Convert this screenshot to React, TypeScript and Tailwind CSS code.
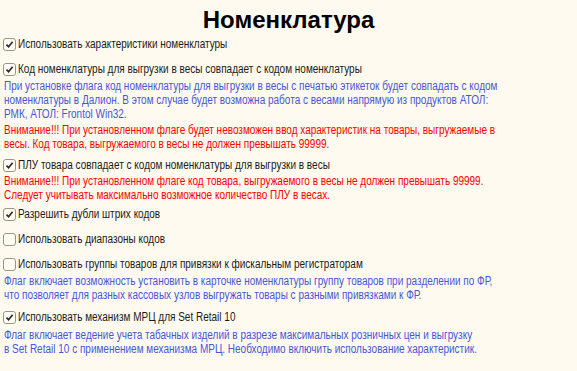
import React from "react";

function Box({ checked }: { checked: boolean }) {
  return (
    <span className="mr-[2px] flex h-[13px] w-[13px] shrink-0 items-center justify-center rounded-[3px] border border-[#9a9680] bg-[#fffdf6]">
      {checked && (
        <svg width="9" height="9" viewBox="0 0 9 9">
          <path d="M1.5 4.6 L3.6 6.8 L7.6 1.8" fill="none" stroke="#2b2b2b" strokeWidth="1.7" />
        </svg>
      )}
    </span>
  );
}

function Flag({ checked, label, className = "" }: { checked: boolean; label: string; className?: string }) {
  return (
    <div className={`flex items-center pl-[3px] text-[#1a1a1a] ${className}`}>
      <Box checked={checked} />
      <span className="inline-block origin-left scale-x-[0.8] whitespace-nowrap">{label}</span>
    </div>
  );
}

function Note({ tone, lines, className = "" }: { tone: "blue" | "red"; lines: string[]; className?: string }) {
  const color = tone === "blue" ? "text-[#4656d8]" : "text-[#ff0000]";
  return (
    <div className={`whitespace-nowrap pl-[4px] leading-[14px] ${color} ${className}`}>
      {lines.map((l, i) => (
        <span key={i} className="block origin-left scale-x-[0.8]">
          {l}
        </span>
      ))}
    </div>
  );
}

export default function App() {
  return (
    <div
      className="h-[371px] w-[577px] overflow-hidden bg-[#fffaef] text-[12.5px] leading-[14px]"
      style={{ fontFamily: '"Liberation Sans", Arial, sans-serif' }}
    >
      <h1 className="pt-[7px] text-center text-[24px] font-bold leading-[26px] text-black">Номенклатура</h1>

      <Flag className="mt-[4px]" checked label="Использовать характеристики номенклатуры" />
      <Flag className="mt-[11px]" checked label="Код номенклатуры для выгрузки в весы совпадает с кодом номенклатуры" />
      <Note
        tone="blue"
        className="mt-[3px]"
        lines={[
          "При установке флага код номенклатуры для выгрузки в весы с печатью этикеток будет совпадать с кодом",
          "номенклатуры в Далион. В этом случае будет возможна работа с весами напрямую из продуктов АТОЛ:",
          "РМК, АТОЛ: Frontol Win32.",
        ]}
      />
      <Note
        tone="red"
        className="mt-[2px]"
        lines={[
          "Внимание!!! При установленном флаге будет невозможен ввод характеристик на товары, выгружаемые в",
          "весы. Код товара, выгружаемого в весы не должен превышать 99999.",
        ]}
      />
      <Flag className="mt-[7px]" checked label="ПЛУ товара совпадает с кодом номенклатуры для выгрузки в весы" />
      <Note
        tone="red"
        className="mt-[2px]"
        lines={[
          "Внимание!!! При установленном флаге код товара, выгружаемого в весы не должен превышать 99999.",
          "Следует учитывать максимально возможное количество ПЛУ в весах.",
        ]}
      />
      <Flag className="mt-[5px]" checked label="Разрешить дубли штрих кодов" />
      <Flag className="mt-[11px]" checked={false} label="Использовать диапазоны кодов" />
      <Flag className="mt-[11px]" checked={false} label="Использовать группы товаров для привязки к фискальным регистраторам" />
      <Note
        tone="blue"
        className="mt-[3px]"
        lines={[
          "Флаг включает возможность установить в карточке номенклатуры группу товаров при разделении по ФР,",
          "что позволяет для разных кассовых узлов выгружать товары с разными привязками к ФР.",
        ]}
      />
      <Flag className="mt-[8px]" checked label="Использовать механизм МРЦ для Set Retail 10" />
      <Note
        tone="blue"
        className="mt-[4px]"
        lines={[
          "Флаг включает ведение учета табачных изделий в разрезе максимальных розничных цен и выгрузку",
          "в Set Retail 10 с применением механизма МРЦ. Необходимо включить использование характеристик.",
        ]}
      />
    </div>
  );
}
